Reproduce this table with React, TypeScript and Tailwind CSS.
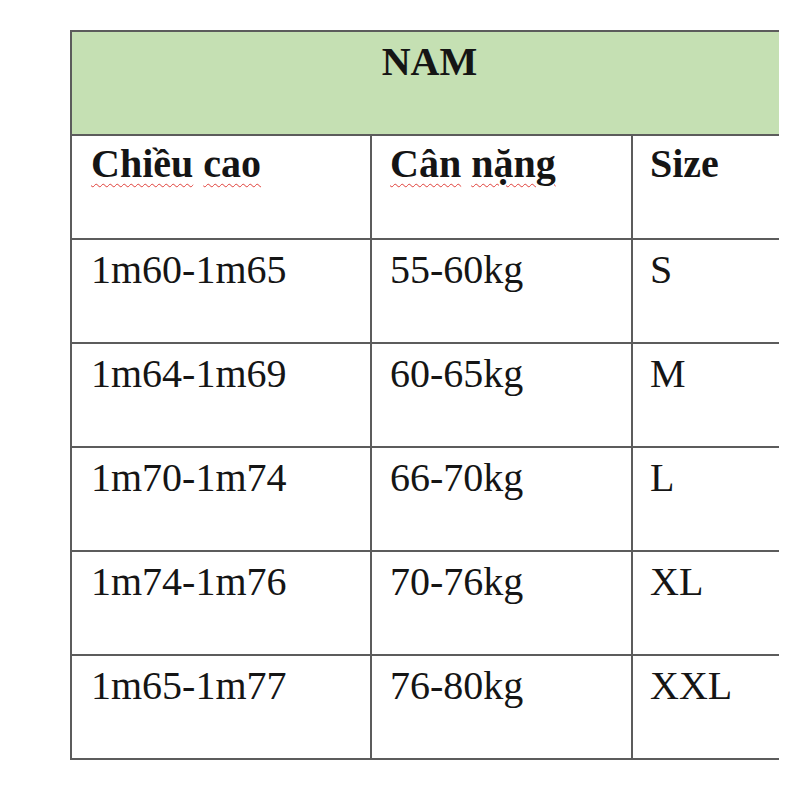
import React from 'react';

const rows: [string, string, string][] = [
  ['1m60-1m65', '55-60kg', 'S'],
  ['1m64-1m69', '60-65kg', 'M'],
  ['1m70-1m74', '66-70kg', 'L'],
  ['1m74-1m76', '70-76kg', 'XL'],
  ['1m65-1m77', '76-80kg', 'XXL'],
];

// spell-check squiggle under the Vietnamese headings
const squiggle = 'underline decoration-wavy decoration-[#e0403a] decoration-1 underline-offset-[6px]';

const App: React.FC = () => {
  return (
    <div className="w-[800px] h-[800px] bg-white pt-[30px] pl-[70px] overflow-hidden font-['Liberation_Serif','Times_New_Roman',serif] text-[40px] leading-[46px] text-[#151515]">
      <table className="w-[708px] border-collapse table-fixed">
        <colgroup>
          <col className="w-[300px]" />
          <col className="w-[261px]" />
          <col className="w-[147px]" />
        </colgroup>
        <thead>
          <tr className="h-[104px]">
            <th
              colSpan={3}
              className="bg-[#c5e0b3] border-2 border-r-0 border-[#5c5c5c] align-top pt-[7px] pl-2 font-bold text-center"
            >
              NAM
            </th>
          </tr>
          <tr className="h-[104px]">
            <th className="border-2 border-[#5c5c5c] align-top pt-[5px] pl-[19px] text-left font-bold">
              <span className={squiggle}>Chiều</span> <span className={squiggle}>cao</span>
            </th>
            <th className="border-2 border-[#5c5c5c] align-top pt-[5px] pl-[18px] text-left font-bold">
              <span className={squiggle}>Cân</span> <span className={squiggle}>nặng</span>
            </th>
            <th className="border-2 border-r-0 border-[#5c5c5c] align-top pt-[5px] pl-[17px] text-left font-bold">
              Size
            </th>
          </tr>
        </thead>
        <tbody>
          {rows.map(([h, w, s]) => (
            <tr key={h} className="h-[104px]">
              <td className="border-2 border-[#5c5c5c] align-top pt-[7px] pl-[19px]">{h}</td>
              <td className="border-2 border-[#5c5c5c] align-top pt-[7px] pl-[18px]">{w}</td>
              <td className="border-2 border-r-0 border-[#5c5c5c] align-top pt-[7px] pl-[17px]">{s}</td>
            </tr>
          ))}
        </tbody>
      </table>
    </div>
  );
};

export default App;
